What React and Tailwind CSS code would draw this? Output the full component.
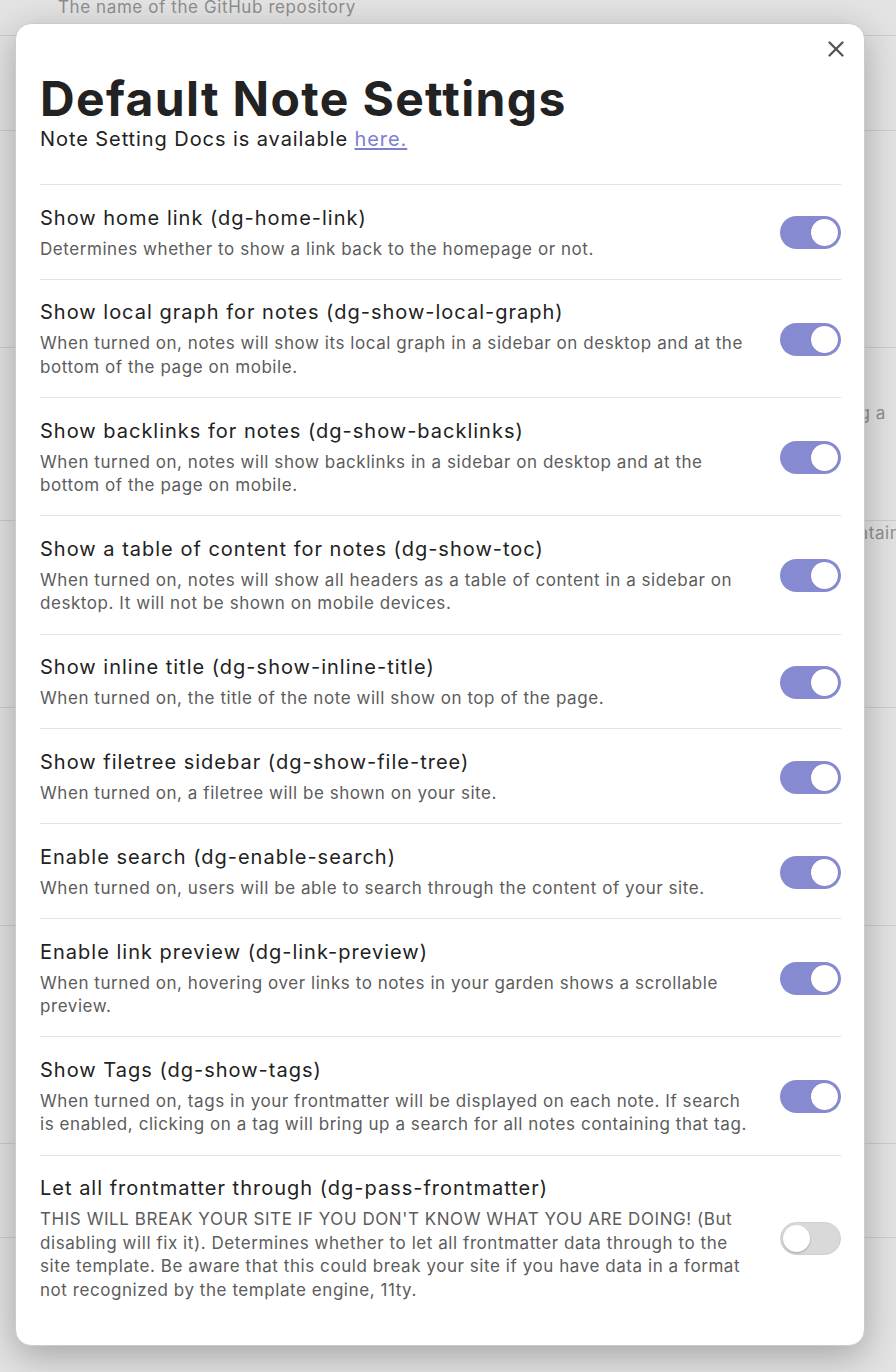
import React from "react";

const rows = [
  {
    name: "Show home link (dg-home-link)",
    desc: "Determines whether to show a link back to the homepage or not.",
    on: true,
  },
  {
    name: "Show local graph for notes (dg-show-local-graph)",
    desc: "When turned on, notes will show its local graph in a sidebar on desktop and at the bottom of the page on mobile.",
    on: true,
  },
  {
    name: "Show backlinks for notes (dg-show-backlinks)",
    desc: "When turned on, notes will show backlinks in a sidebar on desktop and at the bottom of the page on mobile.",
    on: true,
  },
  {
    name: "Show a table of content for notes (dg-show-toc)",
    desc: "When turned on, notes will show all headers as a table of content in a sidebar on desktop. It will not be shown on mobile devices.",
    on: true,
  },
  {
    name: "Show inline title (dg-show-inline-title)",
    desc: "When turned on, the title of the note will show on top of the page.",
    on: true,
  },
  {
    name: "Show filetree sidebar (dg-show-file-tree)",
    desc: "When turned on, a filetree will be shown on your site.",
    on: true,
  },
  {
    name: "Enable search (dg-enable-search)",
    desc: "When turned on, users will be able to search through the content of your site.",
    on: true,
  },
  {
    name: "Enable link preview (dg-link-preview)",
    desc: "When turned on, hovering over links to notes in your garden shows a scrollable preview.",
    on: true,
  },
  {
    name: "Show Tags (dg-show-tags)",
    desc: "When turned on, tags in your frontmatter will be displayed on each note. If search is enabled, clicking on a tag will bring up a search for all notes containing that tag.",
    on: true,
  },
  {
    name: "Let all frontmatter through (dg-pass-frontmatter)",
    desc: "THIS WILL BREAK YOUR SITE IF YOU DON'T KNOW WHAT YOU ARE DOING! (But disabling will fix it). Determines whether to let all frontmatter data through to the site template. Be aware that this could break your site if you have data in a format not recognized by the template engine, 11ty.",
    on: false,
  },
];

function Toggle({ on }) {
  return on ? (
    <div className="flex h-[33px] w-[61px] shrink-0 items-center justify-end rounded-full bg-[#868ad1] px-[3px]">
      <div className="h-[27px] w-[27px] rounded-full bg-white shadow-[0_0_1px_rgba(0,0,0,0.2)]" />
    </div>
  ) : (
    <div className="flex h-[33px] w-[61px] shrink-0 items-center justify-start rounded-full border border-[#d0d0d0] bg-[#d9d9d9] px-[2px]">
      <div className="h-[27px] w-[27px] rounded-full bg-white shadow-[0_1px_2px_rgba(0,0,0,0.25)]" />
    </div>
  );
}

function BackgroundPage() {
  return (
    <div className="flex flex-col text-[17px] leading-[24px] tracking-[0.035em] text-[#8e8e8e]">
      <div className="h-[35px] pl-[58px]">
        <div className="-mt-[5px]">The name of the GitHub repository</div>
      </div>
      <div className="h-[95px] border-t border-[#cdcdcd]" />
      <div className="h-[217px] border-t border-[#cdcdcd]" />
      <div className="h-[173px] border-t border-[#cdcdcd] pr-[10px] pt-[53px] text-right">
        <div>by adding a</div>
      </div>
      <div className="h-[187px] border-t border-[#cdcdcd] text-right">
        <div className="-mr-[14px]">which contains</div>
      </div>
      <div className="h-[218px] border-t border-[#cdcdcd]" />
      <div className="h-[218px] border-t border-[#cdcdcd]" />
      <div className="h-[94px] border-t border-[#cdcdcd]" />
      <div className="h-[140px] border-t border-[#cdcdcd]" />
    </div>
  );
}

export default function App() {
  return (
    <div className="relative h-[1372px] w-full overflow-hidden bg-[#e3e3e3] font-[Inter,'Noto_Sans',sans-serif]">
      <BackgroundPage />
      <div className="absolute left-[15px] top-[23px] w-[850px] rounded-[16px] border border-[#cbcbcb] bg-white pb-[25px] pl-[24px] pr-[23px] pt-[51px] shadow-[0_10px_36px_rgba(0,0,0,0.28)]">
        <button className="absolute right-[20px] top-[17px] flex h-4 w-4 items-center justify-center text-[#555555]">
          <svg width="16" height="16" viewBox="0 0 16 16" fill="none" stroke="currentColor" strokeWidth="2.3" strokeLinecap="round">
            <path d="M1.5 1.5 14.5 14.5" />
            <path d="M14.5 1.5 1.5 14.5" />
          </svg>
        </button>
        <h1 className="text-[48px] font-bold leading-none tracking-[0.028em] text-[#222222]">
          Default Note Settings
        </h1>
        <p className="mt-[4px] text-[20px] leading-[24px] tracking-[0.046em] text-[#222222]">
          Note Setting Docs is available{" "}
          <a className="text-[#7b80cf] underline underline-offset-2" href="#">
            here.
          </a>
        </p>
        <div className="mt-[33px] flex flex-col">
          {rows.map((r) => (
            <div
              key={r.name}
              className="flex items-center justify-between border-t border-[#e2e2e2] pb-[17.8px] pt-[19.5px]"
            >
              <div className="w-[715px]">
                <div className="text-[20px] leading-[26px] tracking-[0.05em] text-[#222222]">{r.name}</div>
                <div className="mt-[7px] text-[17px] leading-[23.5px] tracking-[0.033em] text-[#5c5c5c]">{r.desc}</div>
              </div>
              <Toggle on={r.on} />
            </div>
          ))}
        </div>
      </div>
    </div>
  );
}
